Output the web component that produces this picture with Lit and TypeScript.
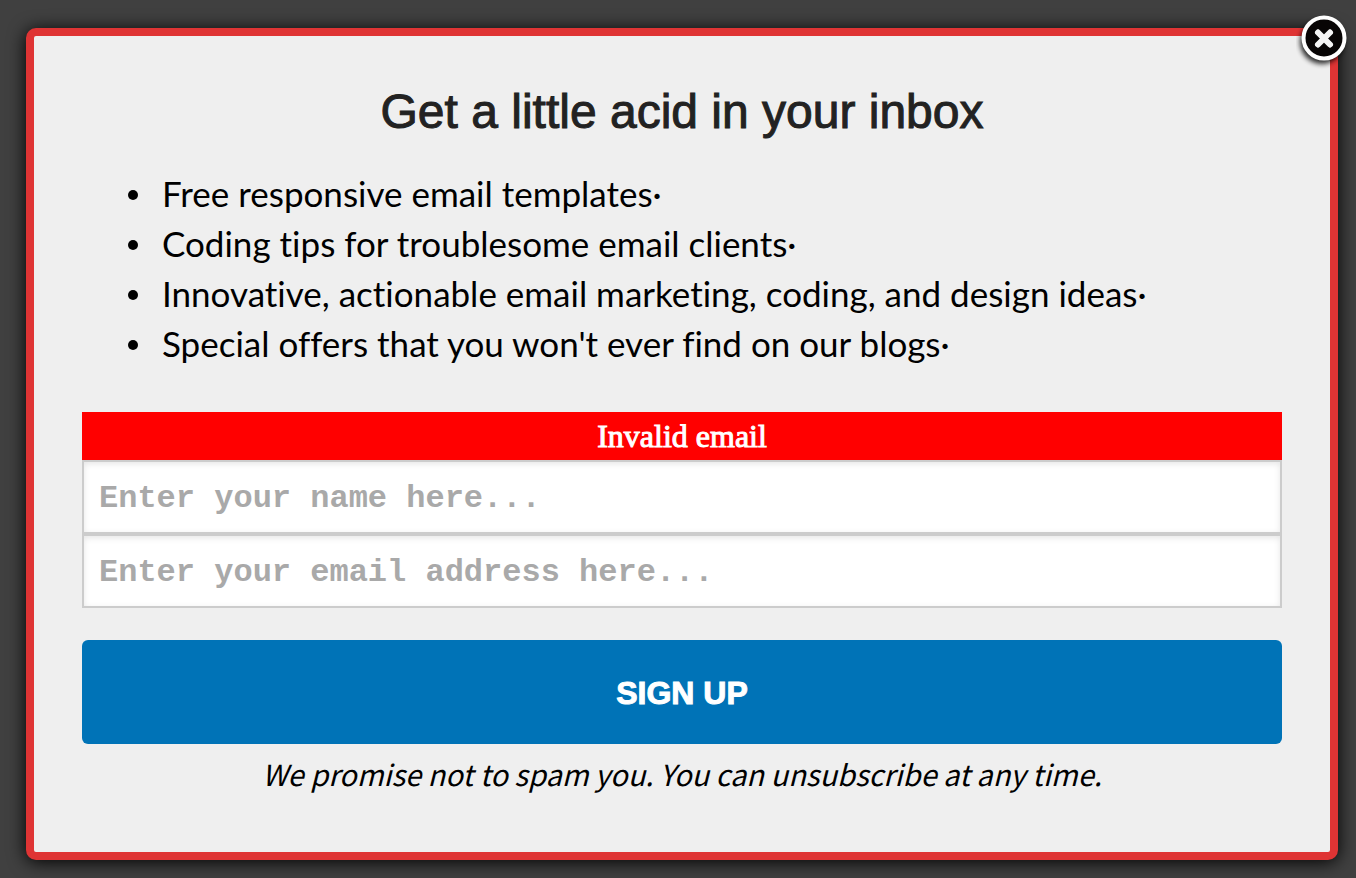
import { LitElement, html, css } from "lit";
import { customElement, state } from "lit/decorators.js";

@customElement("app-root")
export class AppRoot extends LitElement {
  static styles = css`
    :host {
      display: block;
      box-sizing: border-box;
      min-height: 100vh;
      padding: 28px 18px 18px 26px;
      background: #404040;
      color: #000;
      font-family: "Liberation Sans", Arial, sans-serif;
    }
    .dialog {
      position: relative;
      box-sizing: border-box;
      padding: 48px;
      border: 8px solid #df3434;
      border-radius: 10px;
      background: #efefef;
      box-shadow: 0 2px 18px #000;
    }
    .close {
      position: absolute;
      top: -24px;
      right: -22px;
      width: 56px;
      height: 60px;
      padding: 0;
      border: 0;
      background: none;
      cursor: pointer;
    }
    .close svg {
      display: block;
    }
    .title {
      margin: 0 0 28px;
      color: #222;
      font-size: 48px;
      font-weight: 400;
      line-height: 56px;
      text-align: center;
      -webkit-text-stroke: 1px #222;
    }
    .benefits {
      margin: 0 0 44px;
      padding-left: 46px;
      list-style: none;
      font-family: Lato, sans-serif;
      font-size: 35px;
      font-variant-ligatures: none;
      line-height: 50px;
    }
    .benefits li {
      display: flex;
      align-items: center;
      gap: 24px;
    }
    .benefits li::before {
      content: "";
      flex: none;
      width: 10px;
      height: 10px;
      margin-top: 4px;
      border-radius: 50%;
      background: #000;
    }
    .error {
      margin: 0;
      background: #f00;
      color: #fff;
      font-family: "Liberation Serif", "Times New Roman", serif;
      font-size: 32px;
      line-height: 48px;
      text-align: center;
      -webkit-text-stroke: 1px #fff;
    }
    .field {
      display: block;
      box-sizing: border-box;
      width: 100%;
      height: 74px;
      margin: 0;
      padding: 3px 15px 0;
      border: 2px solid #ccc;
      border-radius: 0;
      outline: 0;
      background: #fff;
      box-shadow: inset 0 2px 6px rgba(0, 0, 0, 0.1);
      color: #222;
      font-family: "Liberation Mono", "Courier New", monospace;
      font-size: 32px;
      font-weight: 700;
    }
    .field::placeholder {
      color: #a9a9a9;
      opacity: 1;
    }
    .submit {
      display: block;
      width: 100%;
      height: 104px;
      margin: 32px 0 0;
      padding: 2px 0 0;
      border: 0;
      border-radius: 6px;
      background: #0073b7;
      color: #fff;
      font-family: "Liberation Sans", Arial, sans-serif;
      font-size: 32px;
      font-weight: 700;
      -webkit-text-stroke: 1px #fff;
      cursor: pointer;
    }
    .note {
      margin: 5px 0 7px;
      font-family: "Noto Sans CJK SC", sans-serif;
      font-size: 29px;
      font-style: italic;
      line-height: 48px;
      text-align: center;
    }
  `;

  @state() private error = "Invalid email";

  private benefits = [
    "Free responsive email templates·",
    "Coding tips for troublesome email clients·",
    "Innovative, actionable email marketing, coding, and design ideas·",
    "Special offers that you won't ever find on our blogs·",
  ];

  private submit(event: Event) {
    event.preventDefault();
  }

  render() {
    return html`
      <section class="dialog" role="dialog" aria-labelledby="title">
        <button class="close" type="button" aria-label="Close">
          <svg width="56" height="60" viewBox="0 0 56 60" aria-hidden="true">
            <defs>
              <filter id="soft" x="-30%" y="-30%" width="160%" height="160%">
                <feGaussianBlur stdDeviation="2.5" />
              </filter>
            </defs>
            <circle cx="26" cy="30" r="22" opacity="0.8" filter="url(#soft)" />
            <circle cx="28" cy="26" r="20.5" fill="#080505" stroke="#fff" stroke-width="4" />
            <path d="M22 20.5 34 32.5M34 20.5 22 32.5" stroke="#f4f4f4" stroke-width="6" stroke-linecap="round" />
            <path d="M22 20.5 34 32.5M34 20.5 22 32.5" stroke="#f4f4f4" stroke-width="4.5" stroke-linecap="square" />
          </svg>
        </button>
        <h1 class="title" id="title">Get a little acid in your inbox</h1>
        <ul class="benefits">
          ${this.benefits.map((text) => html`<li>${text}</li>`)}
        </ul>
        <form novalidate @submit=${this.submit}>
          <p class="error" id="error" role="alert">${this.error}</p>
          <input class="field" type="text" name="name" aria-label="Name" placeholder="Enter your name here..." />
          <input class="field" type="email" name="email" aria-label="Email address" aria-describedby="error" placeholder="Enter your email address here..." />
          <button class="submit" type="submit">SIGN UP</button>
        </form>
        <p class="note">We promise not to spam you. You can unsubscribe at any time.</p>
      </section>
    `;
  }
}
